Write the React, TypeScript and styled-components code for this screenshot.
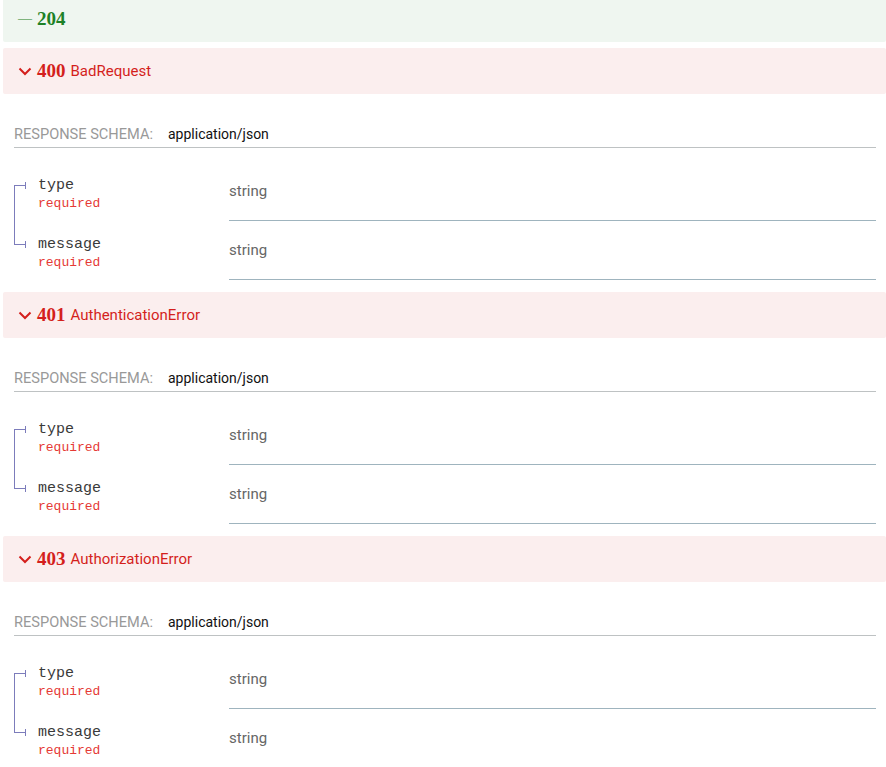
import React from 'react';
import styled, { createGlobalStyle } from 'styled-components';

const GlobalStyle = createGlobalStyle`
  body {
    margin: 0;
    padding: 0;
    background: #ffffff;
    font-family: Roboto, 'Liberation Sans', sans-serif;
    color: #333333;
  }
`;

const theme = {
  success: { text: '#1d8127', bg: '#eff6f0' },
  error: { text: '#d41f1c', bg: '#fbeeee' },
  tree: '#7c7cbb',
  required: '#e53935',
  rowBorder: '#9fb4be',
};

const Page = styled.div`
  margin-top: -4px;
  padding-left: 3px;
  display: flex;
  flex-direction: column;
`;

const ResponseButton = styled.div<{ $kind: 'success' | 'error' }>`
  display: flex;
  align-items: center;
  height: 46px;
  padding-left: 15px;
  border-radius: 2px;
  background: ${(p) => theme[p.$kind].bg};
  color: ${(p) => theme[p.$kind].text};
  font-size: 15px;
  &:first-child {
    margin-bottom: 6px;
  }
`;

const IconBox = styled.span`
  display: inline-flex;
  align-items: center;
  justify-content: center;
  width: 14px;
  margin-right: 5px;
`;

const Dash = styled.span`
  font-family: 'Liberation Serif', serif;
  font-size: 14px;
  line-height: 1;
`;

const Code = styled.strong`
  font-family: 'Liberation Serif', serif;
  font-weight: 700;
  font-size: 19px;
  margin-right: 5px;
`;

const Title = styled.span`
  font-family: Roboto, sans-serif;
  font-size: 15px;
`;

const ResponseBody = styled.div`
  padding: 30px 10px 12px 11px;
`;

const SchemaHeader = styled.div`
  display: flex;
  align-items: center;
  height: 20px;
  padding-bottom: 3px;
  border-bottom: 1px solid #bec2c3;
`;

const SchemaLabel = styled.span`
  font-size: 14.6px;
  text-transform: uppercase;
  color: #999999;
  margin-right: 15px;
`;

const MediaType = styled.span`
  font-size: 14px;
  color: #111111;
`;

const Fields = styled.div`
  margin-top: 14px;
  display: flex;
  flex-direction: column;
`;

const Row = styled.div`
  display: grid;
  grid-template-columns: 215px 1fr;
`;

const NameCell = styled.div<{ $first: boolean; $last: boolean }>`
  padding: 13px 0 0 0;
  box-sizing: border-box;
  background-image: linear-gradient(
    to bottom,
    ${(p) => (p.$first ? 'transparent' : theme.tree)} 0px,
    ${(p) => (p.$first ? 'transparent' : theme.tree)} 24px,
    ${(p) => (p.$last ? 'transparent' : theme.tree)} 24px,
    ${(p) => (p.$last ? 'transparent' : theme.tree)} 100%
  );
  background-size: 1px 100%;
  background-repeat: no-repeat;
  background-position: 0 0;
`;

const NameLine = styled.div`
  display: flex;
  align-items: center;
  height: 20px;
  font-family: 'Liberation Mono', 'Courier New', monospace;
  font-size: 15px;
  color: #3a3a3a;
`;

const Bullet = styled.span`
  display: inline-flex;
  align-items: center;
  margin-right: 12px;
  &::before {
    content: '';
    display: block;
    width: 11px;
    height: 1px;
    background: ${theme.tree};
  }
  &::after {
    content: '';
    display: block;
    width: 1px;
    height: 7px;
    background: ${theme.tree};
  }
`;

const Required = styled.div`
  margin: 2px 0 0 24px;
  font-family: 'Liberation Mono', 'Courier New', monospace;
  font-size: 13px;
  line-height: 14px;
  color: ${theme.required};
`;

const ValueCell = styled.div`
  display: flex;
  align-items: center;
  height: 58px;
  border-bottom: 1px solid ${theme.rowBorder};
  font-size: 15px;
  color: #666666;
`;

const Chevron = () => (
  <svg width="14" height="9" viewBox="0 0 14 9">
    <polyline points="1.5,1.5 7,7 12.5,1.5" fill="none" stroke="currentColor" strokeWidth="2" />
  </svg>
);

const errors = [
  { code: '400', title: 'BadRequest' },
  { code: '401', title: 'AuthenticationError' },
  { code: '403', title: 'AuthorizationError' },
];

const fields = ['type', 'message'];

export default function App() {
  return (
    <>
      <GlobalStyle />
      <Page>
        <ResponseButton $kind="success">
          <IconBox>
            <Dash>—</Dash>
          </IconBox>
          <Code>204</Code>
        </ResponseButton>
        {errors.map((err) => (
          <React.Fragment key={err.code}>
            <ResponseButton $kind="error">
              <IconBox>
                <Chevron />
              </IconBox>
              <Code>{err.code}</Code>
              <Title>{err.title}</Title>
            </ResponseButton>
            <ResponseBody>
              <SchemaHeader>
                <SchemaLabel>Response Schema:</SchemaLabel>
                <MediaType>application/json</MediaType>
              </SchemaHeader>
              <Fields>
                {fields.map((f, i) => (
                  <Row key={f}>
                    <NameCell $first={i === 0} $last={i === fields.length - 1}>
                      <NameLine>
                        <Bullet />
                        {f}
                      </NameLine>
                      <Required>required</Required>
                    </NameCell>
                    <ValueCell>string</ValueCell>
                  </Row>
                ))}
              </Fields>
            </ResponseBody>
          </React.Fragment>
        ))}
      </Page>
    </>
  );
}
